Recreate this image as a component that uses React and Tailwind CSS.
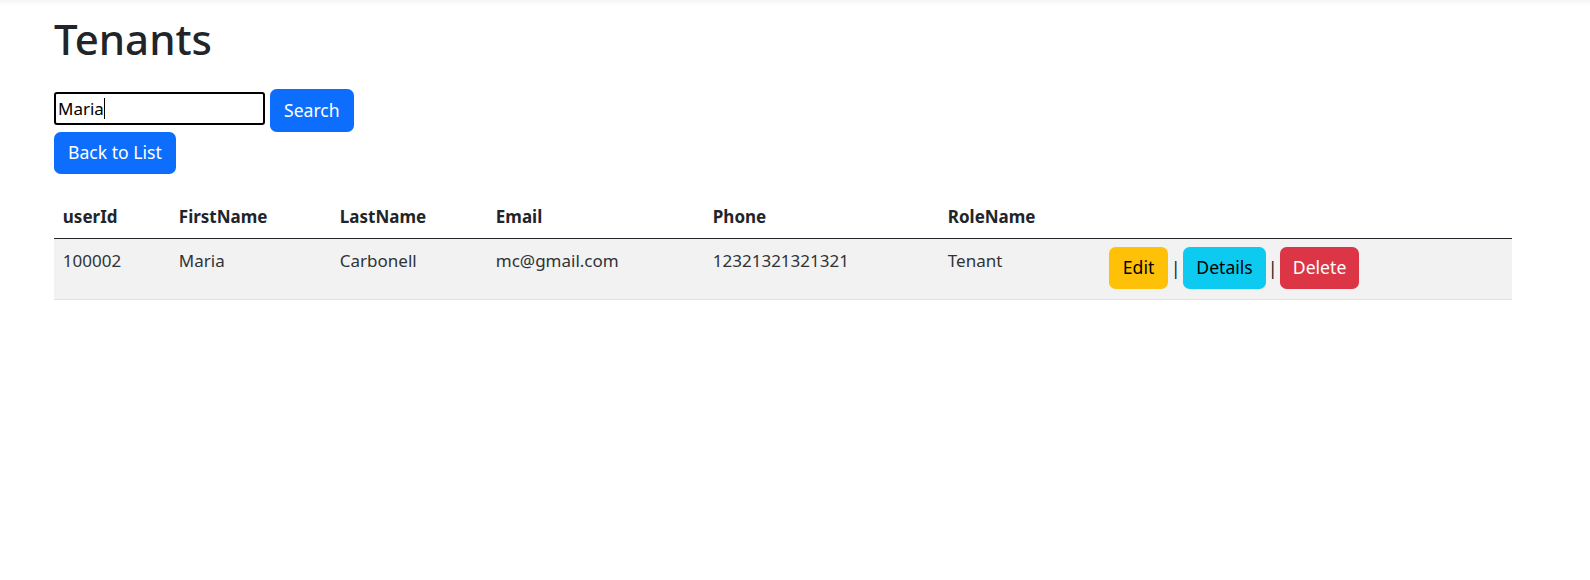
const rows = [
  {
    userId: "100002",
    firstName: "Maria",
    lastName: "Carbonell",
    email: "mc@gmail.com",
    phone: "12321321321321",
    role: "Tenant",
  },
];

const btn = "inline-block py-[6.6px] text-[17.6px] leading-[27px] border border-transparent rounded-[6.6px]";

export default function App() {
  return (
    <div className="min-h-[580px] bg-white text-[#212529] font-['Noto_Sans',sans-serif] text-[17px] leading-[26.4px]">
      <div className="h-[6px] bg-gradient-to-b from-[#f5f5f5] to-white" />
      <div className="px-[54px]">
        <h1 className="text-[42px] leading-[50.4px] font-medium mt-[8px] mb-[25px]">Tenants</h1>

        <div className="flex items-start gap-[5px]">
          <div className="mt-[3px] w-[211px] h-[33px] border-2 border-black rounded-[3px] flex items-center px-[2px] text-[17px] text-black">
            Maria<span className="inline-block w-px h-[21px] bg-black" />
          </div>
          <button className={btn + " px-[13px] bg-[#0d6efd] text-white"}>Search</button>
        </div>

        <div>
          <button className={btn + " px-[13px] bg-[#0d6efd] text-white"}>Back to List</button>
        </div>

        <table className="mt-[21px] w-[1458px] border-collapse text-left">
          <thead>
            <tr className="border-b border-[#212529]">
              <th className="w-[116px] px-[8.8px] pt-[8.8px] pb-[7.8px] font-bold">userId</th>
              <th className="w-[161px] px-[8.8px] pt-[8.8px] pb-[7.8px] font-bold">FirstName</th>
              <th className="w-[156px] px-[8.8px] pt-[8.8px] pb-[7.8px] font-bold">LastName</th>
              <th className="w-[217px] px-[8.8px] pt-[8.8px] pb-[7.8px] font-bold">Email</th>
              <th className="w-[235px] px-[8.8px] pt-[8.8px] pb-[7.8px] font-bold">Phone</th>
              <th className="w-[161px] px-[8.8px] pt-[8.8px] pb-[7.8px] font-bold">RoleName</th>
              <th className="px-[8.8px] pt-[8.8px] pb-[7.8px]"></th>
            </tr>
          </thead>
          <tbody>
            {rows.map((r) => (
              <tr key={r.userId} className="bg-[#f2f2f2] border-b border-[#dee2e6]">
                <td className="p-[8.8px] align-top text-[#2f3337]">{r.userId}</td>
                <td className="p-[8.8px] align-top text-[#2f3337]">{r.firstName}</td>
                <td className="p-[8.8px] align-top text-[#2f3337]">{r.lastName}</td>
                <td className="p-[8.8px] align-top text-[#2f3337]">{r.email}</td>
                <td className="p-[8.8px] align-top text-[#2f3337]">{r.phone}</td>
                <td className="p-[8.8px] align-top text-[#2f3337]">{r.role}</td>
                <td className="px-[8.8px] pt-[8px] pb-[10px] align-top">
                  <div className="flex items-center">
                    <button className={btn + " px-[13px] bg-[#ffc107] text-black"}>Edit</button>
                    <span className="w-[15px] text-center text-[18px]">|</span>
                    <button className={btn + " px-[12px] bg-[#0dcaf0] text-black"}>Details</button>
                    <span className="w-[14px] text-center text-[18px]">|</span>
                    <button className={btn + " px-[12px] bg-[#dc3545] text-white"}>Delete</button>
                  </div>
                </td>
              </tr>
            ))}
          </tbody>
        </table>
      </div>
    </div>
  );
}
